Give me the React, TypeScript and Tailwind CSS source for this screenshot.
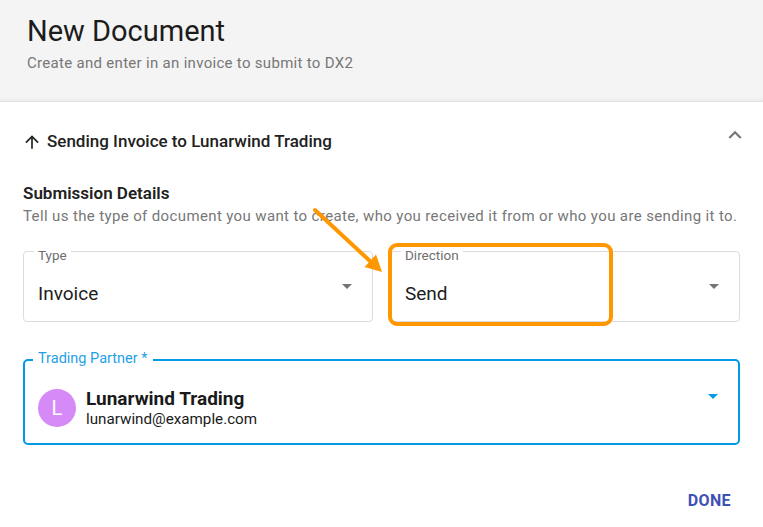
function ArrowUpIcon() {
  return (
    <svg width="20" height="20" viewBox="0 0 24 24" fill="#212121">
      <path d="M4 12l1.41 1.41L11 7.83V20h2V7.83l5.58 5.59L20 12l-8-8-8 8z" />
    </svg>
  );
}

function ExpandLess() {
  return (
    <svg width="26" height="26" viewBox="0 0 24 24" fill="#757575">
      <path d="M12 8l-6 6 1.41 1.41L12 10.83l4.59 4.58L18 14z" />
    </svg>
  );
}

function Caret({ color = "#757575" }: { color?: string }) {
  return (
    <svg width="24" height="24" viewBox="0 0 24 24" fill={color}>
      <path d="M7 10l5 5 5-5z" />
    </svg>
  );
}

function SelectField({ label, value }: { label: string; value: string }) {
  return (
    <div className="relative flex h-[71px] items-center rounded border border-[#dcdcdc] pl-[14px] pr-[13px]">
      <span className="absolute -top-[5px] left-[10px] bg-white px-[4px] text-[13.5px] leading-[16px] text-[#6f6f6f]">
        {label}
      </span>
      <span className="mt-[16px] flex-1 text-[19px] text-[#1c1c1c]">{value}</span>
      <span className="mt-[-2px]">
        <Caret />
      </span>
    </div>
  );
}

export default function App() {
  return (
    <div className="h-[527px] w-[763px] bg-white font-['Roboto',sans-serif] text-[#212121]">
      {/* header */}
      <div className="h-[102px] border-b border-[#e3e3e3] bg-[#f4f4f4] px-[27px] pt-[13px] shadow-[inset_0_-4px_4px_-3px_rgba(0,0,0,0.06)]">
        <h1 className="text-[29px] leading-[36px] text-[#1c1c1c]">New Document</h1>
        <p className="mt-[4px] text-[15px] leading-[20px] tracking-[0.3px] text-[#777]">
          Create and enter in an invoice to submit to DX2
        </p>
      </div>

      <div className="relative px-[23px]">
        {/* section row */}
        <div className="flex h-[80px] items-center">
          <span className="-ml-[1px]">
            <ArrowUpIcon />
          </span>
          <span className="ml-[5px] flex-1 text-[17px] font-medium">Sending Invoice to Lunarwind Trading</span>
          <span className="-mr-[8px] -mt-[15px]">
            <ExpandLess />
          </span>
        </div>

        <div className="text-[17px] font-semibold leading-[22px]">Submission Details</div>
        <p className="mt-[1px] whitespace-nowrap text-[15px] leading-[22px] tracking-[0.37px] text-[#777]">
          Tell us the type of document you want to create, who you received it from or who you are sending it to.
        </p>

        {/* type + direction */}
        <div className="mt-[24px] grid grid-cols-2 gap-[17px]">
          <SelectField label="Type" value="Invoice" />
          <div className="relative">
            <SelectField label="Direction" value="Send" />
            <div className="pointer-events-none absolute -left-[2px] -top-[8px] h-[83px] w-[225px] rounded-[9px] border-[4px] border-[#ff9800]" />
          </div>
        </div>

        {/* trading partner */}
        <div className="relative mt-[37px] flex h-[86px] items-center rounded-[5px] border-2 border-[#039be5] pl-[13px] pr-[13px] pt-[12px]">
          <span className="absolute -top-[11px] left-[8px] bg-white px-[5px] text-[14.5px] leading-[18px] text-[#1e9fe6]">
            Trading Partner *
          </span>
          <div className="flex h-[38px] w-[38px] items-center justify-center rounded-full bg-[#d68af8] text-[20px] text-white">
            L
          </div>
          <div className="ml-[10px] flex-1">
            <div className="text-[19px] font-bold leading-[22px] text-[#1a1a1a]">Lunarwind Trading</div>
            <div className="text-[15.2px] leading-[18px] text-[#1a1a1a]">lunarwind@example.com</div>
          </div>
          <span className="-mt-[24px]">
            <Caret color="#039be5" />
          </span>
        </div>

        <div className="flex justify-end pr-[9px] pt-[44px]">
          <button className="text-[16px] font-bold tracking-[0.4px] text-[#3f51b5]">DONE</button>
        </div>

        {/* annotation arrow */}
        <svg className="pointer-events-none absolute left-0 top-0" width="763" height="300" viewBox="0 0 763 300">
          <line x1="315" y1="108" x2="371" y2="160" stroke="#ff9800" strokeWidth="4" strokeLinecap="round" />
          <path d="M382 170 L364.5 165 L376 152.5 Z" fill="#ff9800" />
        </svg>
      </div>
    </div>
  );
}
